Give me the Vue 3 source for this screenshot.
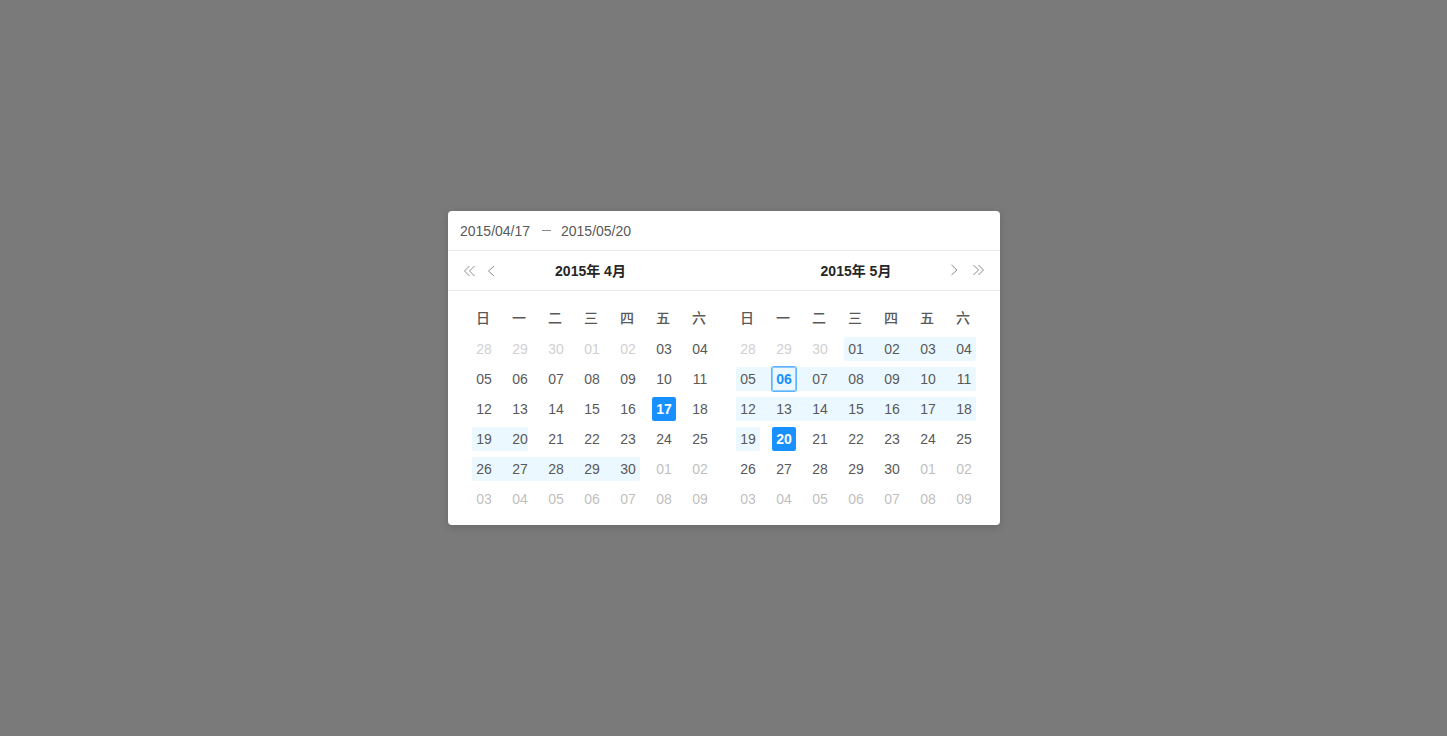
<script setup>
import { ref } from 'vue'

const start = ref('2015/04/17')
const end = ref('2015/05/20')
const weekdays = ['日', '一', '二', '三', '四', '五', '六']

const pad = (n) => String(n).padStart(2, '0')

// Six weeks: `lead` lists the previous month's days, then up to 30, then the next month's.
function buildWeeks(lead, firstDay, marks, bands) {
  const days = lead.map((n) => ({ n, muted: 'before' }))
  for (let n = firstDay; n <= 30; n++) days.push({ n, mark: marks[n] })
  for (let n = 1; days.length < 42; n++) days.push({ n, muted: 'after' })
  const weeks = []
  for (let i = 0; i < 42; i += 7) {
    weeks.push(
      days.slice(i, i + 7).map((d, col) => {
        const band = bands[i / 7]
        return { ...d, label: pad(d.n), band: band && band.col === col ? band.width : 0 }
      })
    )
  }
  return weeks
}

const months = [
  {
    title: '2015年 4月',
    side: 'prev',
    weeks: buildWeeks([28, 29, 30, 1, 2], 3, { 17: 'selected' }, {
      3: { col: 0, width: 56 },
      4: { col: 0, width: 168 }
    })
  },
  {
    title: '2015年 5月',
    side: 'next',
    weeks: buildWeeks([28, 29, 30], 1, { 6: 'today', 20: 'selected' }, {
      0: { col: 3, width: 132 },
      1: { col: 0, width: 240 },
      2: { col: 0, width: 240 },
      3: { col: 0, width: 24 }
    })
  }
]
</script>

<template>
  <main class="backdrop">
    <section class="picker" aria-label="日期范围">
      <div class="inputs">
        <input v-model="start" class="date" type="text" aria-label="开始日期" />
        <span class="dash"></span>
        <input v-model="end" class="date" type="text" aria-label="结束日期" />
      </div>
      <header class="heads">
        <div v-for="m in months" :key="m.title" class="head" :class="m.side">
          <div class="nav nav-prev">
            <template v-if="m.side === 'prev'">
              <button type="button" class="arrow" aria-label="上一年">
                <svg width="12" height="12" viewBox="0 0 12 12"><path d="M6.5 1 L1.5 6 L6.5 11 M11.5 1 L6.5 6 L11.5 11" /></svg>
              </button>
              <button type="button" class="arrow" aria-label="上个月">
                <svg width="12" height="12" viewBox="0 0 12 12"><path d="M9 1 L3.5 6 L9 11" /></svg>
              </button>
            </template>
          </div>
          <h2 class="title">{{ m.title }}</h2>
          <div class="nav nav-next">
            <template v-if="m.side === 'next'">
              <button type="button" class="arrow" aria-label="下个月">
                <svg width="12" height="12" viewBox="0 0 12 12"><path d="M3.5 1 L9 6 L3.5 11" /></svg>
              </button>
              <button type="button" class="arrow" aria-label="下一年">
                <svg width="12" height="12" viewBox="0 0 12 12"><path d="M1.5 1 L6.5 6 L1.5 11 M6.5 1 L11.5 6 L6.5 11" /></svg>
              </button>
            </template>
          </div>
        </div>
      </header>
      <div class="months">
        <table v-for="m in months" :key="m.title" class="month" :aria-label="m.title">
          <thead>
            <tr>
              <th v-for="w in weekdays" :key="w" scope="col">{{ w }}</th>
            </tr>
          </thead>
          <tbody>
            <tr v-for="(week, i) in m.weeks" :key="i">
              <td v-for="(d, j) in week" :key="j">
                <span v-if="d.band" class="band" :style="{ width: d.band + 'px' }"></span>
                <button type="button" class="day" :class="[d.muted, d.mark]">{{ d.label }}</button>
              </td>
            </tr>
          </tbody>
        </table>
      </div>
    </section>
  </main>
</template>

<style>
body {
  background: #7a7a7a;
}
</style>

<style scoped>
.backdrop {
  box-sizing: border-box;
  min-height: 100vh;
  display: flex;
  align-items: center;
  justify-content: center;
  padding-left: 1px;
  font: 14px/22px "Liberation Sans", "Noto Sans CJK SC", sans-serif;
  color: #595959;
}
.picker {
  background: #fff;
  border-radius: 4px;
  box-shadow: 0 2px 8px rgba(0, 0, 0, 0.15);
}
.inputs {
  display: flex;
  align-items: center;
  gap: 10px;
  height: 39px;
  padding: 0 12px;
  border-bottom: 1px solid #e8e8e8;
}
.date {
  width: 72px;
  padding: 0;
  border: 0;
  outline: 0;
  background: none;
  font: inherit;
  color: inherit;
}
.dash {
  width: 9px;
  height: 1px;
  background: #8c8c8c;
}
.heads {
  display: flex;
  gap: 12px;
  height: 39px;
  padding: 0 18px;
  border-bottom: 1px solid #e8e8e8;
}
.head {
  display: grid;
  grid-template-columns: 1fr auto 1fr;
  align-items: center;
  width: 252px;
}
.title {
  margin: 0;
  font-size: 14px;
  font-weight: bold;
  color: #262626;
}
.prev .title {
  padding-right: 3px;
}
.nav {
  display: flex;
}
.nav-prev {
  gap: 10px;
  margin-left: -3px;
}
.nav-next {
  gap: 12px;
  justify-content: flex-end;
  margin-right: -2px;
  padding-bottom: 2px;
}
button {
  padding: 0;
  border: 0;
  background: none;
  font: inherit;
  color: inherit;
  cursor: pointer;
}
.arrow {
  width: 12px;
  height: 12px;
}
.arrow svg {
  display: block;
  fill: none;
  stroke: #8c8c8c;
  stroke-width: 1;
}
.months {
  display: flex;
  gap: 12px;
  padding: 13px 18px 11px;
}
.month {
  width: 252px;
  table-layout: fixed;
  border-collapse: collapse;
}
th,
td {
  position: relative;
  height: 30px;
  padding: 0;
  text-align: center;
  vertical-align: middle;
}
th {
  height: 28px;
  padding: 0 2px 2px 0;
  font-weight: 500;
}
.day {
  position: relative;
  display: block;
  width: 24px;
  height: 24px;
  margin: 0 auto;
  border-radius: 2px;
  line-height: 24px;
}
.band {
  position: absolute;
  top: 3px;
  left: 6px;
  height: 24px;
  border-radius: 2px;
  background: #ecf8ff;
}
.before {
  color: #d0d0d0;
}
.after {
  color: #bfbfbf;
}
.selected {
  background: #1890ff;
  color: #fff;
  font-weight: bold;
}
.today {
  box-shadow: 0 0 0 1px #5fb2ff, inset 0 0 0 1px #8ac8ff;
  color: #1890ff;
  font-weight: bold;
}
</style>
